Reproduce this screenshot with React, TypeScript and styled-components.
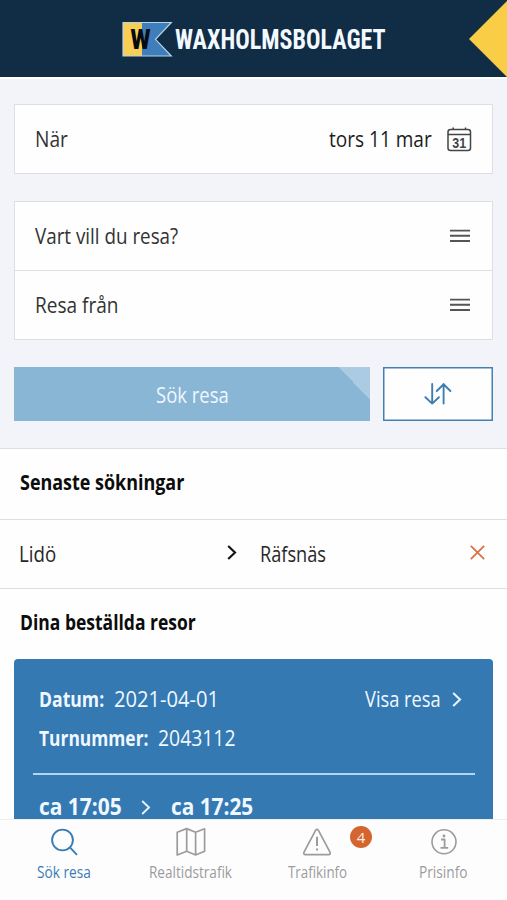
import React from 'react';
import styled, { createGlobalStyle } from 'styled-components';

const Global = createGlobalStyle`
  * { box-sizing: border-box; }
  body { margin: 0; background: #fefefe; font-family: "Open Sans", sans-serif; }
  svg { display: block; flex: none; }
`;

const Screen = styled.div`
  width: 507px;
  height: 900px;
  overflow: hidden;
  display: flex;
  flex-direction: column;
  background: #fefefe;
`;

/* Narrowed text: $w is the space it takes, $k the horizontal squeeze. */
const Label = styled.span<{ $w: number; $k: number; $size?: number; $bold?: boolean; $color?: string }>`
  display: block;
  flex: none;
  width: ${(p) => p.$w}px;
  transform: scaleX(${(p) => p.$k});
  transform-origin: 0 50%;
  white-space: nowrap;
  font-size: ${(p) => p.$size ?? 22}px;
  line-height: 30px;
  font-weight: ${(p) => (p.$bold ? 700 : 440)};
  color: ${(p) => p.$color ?? 'inherit'};
`;

const Header = styled.header`
  position: relative;
  flex: none;
  height: 77px;
  padding: 21px 0 0 122px;
  display: flex;
  align-items: flex-start;
  gap: 2px;
  background: #112c45;
`;

const Brand = styled.span`
  display: block;
  width: 212px;
  margin-top: 4px;
  font: 700 28px/30px Roboto, sans-serif;
  font-stretch: 75%;
  color: #f2f9ff;
  transform: scaleX(0.86);
  transform-origin: 0 50%;
`;

const Corner = styled.div`
  position: absolute;
  top: 1px;
  right: 0;
  width: 38px;
  height: 76px;
  background: #f9cd46;
  clip-path: polygon(100% 0, 100% 100%, 0 50%);
`;

const SearchPanel = styled.section`
  flex: none;
  height: 372px;
  padding: 25px 14px 0;
  border-top: 2px solid #fcfdfe;
  border-bottom: 1px solid #dedfe3;
  background: #f3f4f9;
`;

const FieldGroup = styled.div`
  margin-bottom: 27px;
  border: 1px solid #dddfe4;
  background: #fefefe;
  color: #333;
`;

const Field = styled.div<{ $h: number }>`
  height: ${(p) => p.$h}px;
  padding: 0 20px 0 19.5px;
  display: flex;
  align-items: center;
  & + & { border-top: 1px solid #dddfe4; }
  > span { margin-bottom: 2px; }
`;

const Spacer = styled.div`
  flex: 1;
`;

const Actions = styled.div`
  display: flex;
  gap: 13px;
`;

const SearchButton = styled.button`
  width: 356px;
  height: 54px;
  border: 0;
  padding: 0 0 1px 1px;
  display: flex;
  align-items: center;
  justify-content: center;
  font-family: inherit;
  color: #f0f7fd;
  background: linear-gradient(to top right, transparent 50%, #abcbe3 50%) top right / 32px 32px no-repeat, #8ab6d6;
`;

const SwapButton = styled.button`
  width: 110px;
  height: 54px;
  padding: 0;
  display: flex;
  align-items: center;
  justify-content: center;
  border: 0;
  box-shadow: inset 0 0 0 1.5px #4480b3;
  background: #fefefe;
`;

const Heading = styled.h2<{ $h: number; $top: number }>`
  flex: none;
  margin: 0;
  height: ${(p) => p.$h}px;
  padding: ${(p) => p.$top}px 0 0 19.5px;
  color: #0c0c0c;
`;

const Recent = styled.div`
  flex: none;
  height: 70px;
  border: solid #dedfe2;
  border-width: 1px 0;
  padding: 0 22px 3px 18px;
  display: flex;
  align-items: center;
  color: #262626;
`;

const From = styled.div`
  width: 209px;
  padding-left: 1px;
`;

const To = styled.div`
  margin-left: 23px;
  flex: 1;
`;

const Card = styled.article`
  flex: none;
  margin: 0 14px;
  height: 160px;
  width: 479px;
  overflow: hidden;
  border-radius: 4px 4px 0 0;
  padding: 24px 18px 0 19px;
  background: #3579b3;
  color: #f0f8ff;
`;

const CardRow = styled.div<{ $h: number }>`
  height: ${(p) => p.$h}px;
  padding: 0 13px 0 6px;
  display: flex;
  align-items: flex-start;
`;

const Gap = styled.div<{ $w: number }>`
  width: ${(p) => p.$w}px;
`;

const Rule = styled.div`
  height: 2px;
  background: #b5d4ee;
  margin-bottom: 16px;
`;

const ChevronBox = styled.div`
  padding-top: 9px;
`;

const TabBar = styled.nav`
  flex: none;
  height: 81px;
  border-top: 1px solid #eceef0;
  background: #fdfdfe;
  display: grid;
  grid-template-columns: 128px 126px 126px 127px;
`;

const Tab = styled.div<{ $active?: boolean }>`
  position: relative;
  padding-top: 7px;
  display: flex;
  flex-direction: column;
  align-items: center;
  color: ${(p) => (p.$active ? '#3a7cb4' : '#9c9c9c')};
`;

const Badge = styled.span`
  position: absolute;
  left: 96px;
  top: 6px;
  width: 22px;
  height: 22px;
  border-radius: 50%;
  background: #d4652f;
  color: #fbeee6;
  font-size: 15px;
  line-height: 22px;
  text-align: center;
`;

const Flag = () => (
  <svg width="51" height="36" viewBox="0 0 51 36">
    <path d="M1 1.5H21V35H1Z" fill="#f8cf56" />
    <path d="M20 1.5H49L33.5 18.3 49 35H20Z" fill="#3f7ebb" />
    <path d="M1 1.5H49.3L33.5 18.3 49.3 35H1Z" fill="none" stroke="#b5d4e6" strokeWidth="1.2" />
    <text transform="translate(8.6 28.3) scale(.8 1)" fontFamily="Roboto" fontWeight="900" fontSize="27.5" textLength="25" lengthAdjust="spacingAndGlyphs" fill="#050b10">W</text>
  </svg>
);

const Calendar = () => (
  <svg width="25" height="25" viewBox="0 0 25 25" fill="none" stroke="#444" strokeWidth="1.5">
    <rect x="1" y="2.5" width="22.5" height="21" rx="2.5" />
    <path d="M1 7.5H23.5M6.2 .5V3M18.5 .5V3" />
    <text transform="translate(5.3 20.6) scale(.86 1)" fontFamily="Liberation Sans" fontWeight="700" fontSize="14.5" fill="#444" stroke="none">31</text>
  </svg>
);

const Menu = () => (
  <svg width="24" height="24" viewBox="0 0 24 24" stroke="#555" strokeWidth="1.9">
    <path d="M2 6.6H22M2 11.8H22M2 17H22" />
  </svg>
);

const Swap = () => (
  <svg width="28" height="22" viewBox="0 0 28 22" fill="none" stroke="#3f7db3" strokeWidth="1.9" strokeLinecap="round" strokeLinejoin="round">
    <path d="M8.2 1V20.6M1.4 14.2L8.2 20.6 14.9 14.2M19.6 20.6V1M12.8 8L19.6 1.3 26.4 8" />
  </svg>
);

const Chevron = ({ color, weight = 2.2 }: { color: string; weight?: number }) => (
  <svg width="10" height="15" viewBox="0 0 10 15" fill="none" stroke={color} strokeWidth={weight}>
    <path d="M1.2 1L8 7.5 1.2 14" />
  </svg>
);

const Cross = () => (
  <svg width="15" height="15" viewBox="0 0 15 15" stroke="#d9703f" strokeWidth="1.7">
    <path d="M.8 .8L14.2 14.2M14.2 .8L.8 14.2" />
  </svg>
);

const tabIcon = { width: 30, height: 30, viewBox: '0 0 30 30', fill: 'none', stroke: 'currentColor', strokeWidth: 1.9, strokeLinejoin: 'round' as const };

const SearchIcon = () => (
  <svg {...tabIcon}>
    <circle cx="13.5" cy="13" r="10.4" />
    <path d="M20.7 20.2L28 27.8" />
  </svg>
);

const MapIcon = () => (
  <svg {...tabIcon} strokeWidth="1.7">
    <path d="M1.2 5.2L10.7 1.6 19.6 5.2 28.6 1.8V24.3L19.6 28 10.7 24.3 1.2 28ZM10.7 1.6V24.3M19.6 5.2V28" />
  </svg>
);

const AlertIcon = () => (
  <svg {...tabIcon} strokeWidth="1.7">
    <path d="M13.7 3.2Q15 1.4 16.3 3.2L28 25.2Q28.8 27.6 26.6 27.7H3.4Q1.2 27.6 2 25.2Z" />
    <path d="M15 9.8V19M15 21.4V23.6" strokeWidth="2" />
  </svg>
);

const InfoIcon = () => (
  <svg {...tabIcon} strokeWidth="1.6">
    <circle cx="15" cy="14.8" r="12" />
    <path d="M12 12.5H15.6V20.8M11.5 20.8H19.2" strokeWidth="1.8" />
    <circle cx="15" cy="9" r="1.4" fill="currentColor" stroke="none" />
  </svg>
);

export default function App() {
  return (
    <Screen>
      <Global />
      <Header>
        <Flag />
        <Brand>WAXHOLMSBOLAGET</Brand>
        <Corner />
      </Header>

      <SearchPanel>
        <FieldGroup>
          <Field $h={68}>
            <Label $w={35} $k={0.87}>När</Label>
            <Spacer />
            <Label $w={118} $k={0.865} $color="#1c1c1c">tors 11 mar</Label>
            <Calendar />
          </Field>
        </FieldGroup>
        <FieldGroup>
          <Field $h={68}>
            <Label $w={146} $k={0.855}>Vart vill du resa?</Label>
            <Spacer />
            <Menu />
          </Field>
          <Field $h={69}>
            <Label $w={86} $k={0.865}>Resa från</Label>
            <Spacer />
            <Menu />
          </Field>
        </FieldGroup>
        <Actions>
          <SearchButton>
            <Label $w={74} $k={0.84}>Sök resa</Label>
          </SearchButton>
          <SwapButton>
            <Swap />
          </SwapButton>
        </Actions>
      </SearchPanel>

      <Heading $h={70} $top={17}>
        <Label $bold $w={166} $k={0.815}>Senaste sökningar</Label>
      </Heading>
      <Recent>
        <From>
          <Label $w={38} $k={0.85}>Lidö</Label>
        </From>
        <Chevron color="#151515" />
        <To>
          <Label $w={69} $k={0.825}>Räfsnäs</Label>
        </To>
        <Cross />
      </Recent>
      <Heading $h={70} $top={17}>
        <Label $bold $w={178} $k={0.795}>Dina beställda resor</Label>
      </Heading>

      <Card>
        <CardRow $h={39}>
          <Label $bold $w={74.5} $k={0.8}>Datum:</Label>
          <Label $w={107} $k={0.915}>2021-04-01</Label>
          <Spacer />
          <Label $w={87} $k={0.83}>Visa resa</Label>
          <ChevronBox>
            <Chevron color="#e4f2ff" weight={2.1} />
          </ChevronBox>
        </CardRow>
        <CardRow $h={51}>
          <Label $bold $w={118.5} $k={0.79}>Turnummer:</Label>
          <Label $w={79} $k={0.88}>2043112</Label>
        </CardRow>
        <Rule />
        <CardRow $h={40}>
          <Label $bold $size={23} $w={102} $k={0.91}>ca 17:05</Label>
          <ChevronBox>
            <Chevron color="#e4f2ff" weight={1.9} />
          </ChevronBox>
          <Gap $w={19.5} />
          <Label $bold $size={23} $w={84} $k={0.905}>ca 17:25</Label>
        </CardRow>
      </Card>

      <TabBar>
        <Tab $active>
          <SearchIcon />
          <Label $size={15.5} $w={55} $k={0.88}>Sök resa</Label>
        </Tab>
        <Tab>
          <MapIcon />
          <Label $size={15.5} $w={85} $k={0.875}>Realtidstrafik</Label>
        </Tab>
        <Tab>
          <AlertIcon />
          <Badge>4</Badge>
          <Label $size={15.5} $w={59} $k={0.86}>Trafikinfo</Label>
        </Tab>
        <Tab>
          <InfoIcon />
          <Label $size={15.5} $w={49} $k={0.885}>Prisinfo</Label>
        </Tab>
      </TabBar>
    </Screen>
  );
}
